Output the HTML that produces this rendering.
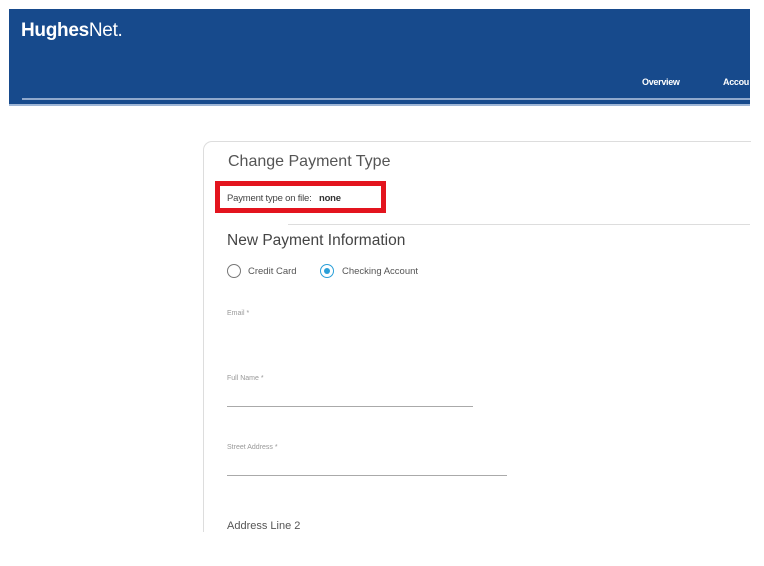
<!DOCTYPE html>
<html><head><style>
body{margin:0;width:764px;height:566px;background:#fff;position:relative;overflow:hidden;font-family:"Liberation Sans",sans-serif;}
.a{position:absolute;}
.hdr{left:9px;top:9px;width:741px;height:97px;background:#174a8c;}
.lbl{color:#999;font-size:7px;}
</style></head><body>
<div class="a hdr"></div>
<div class="a" style="left:9px;top:104px;width:741px;height:2px;background:#9fb6d6"></div>
<div class="a" style="left:22px;top:98px;width:728px;height:2px;background:#8fa8cc"></div>
<div class="a" style="left:21px;top:20px;color:#fff;font-size:19px;letter-spacing:-0.3px"><b>Hughes</b>Net.</div>
<div class="a" style="left:642px;top:77px;color:#fff;font-size:9px;font-weight:bold;letter-spacing:-0.3px">Overview</div>
<div class="a" style="left:723px;top:77px;color:#fff;font-size:9px;font-weight:bold;letter-spacing:-0.3px">Accou</div>
<div class="a" style="left:203px;top:141px;width:547px;height:400px;border:1px solid #ddd;border-radius:9px 0 0 0;border-right:none;border-bottom:none"></div>
<div class="a" style="left:0;top:532px;width:764px;height:34px;background:#fff"></div>
<div class="a" style="left:228px;top:153px;color:#555;font-size:16px">Change Payment Type</div>
<div class="a" style="left:215px;top:181px;width:161px;height:22px;border:5px solid #e3141e"></div>
<div class="a" style="left:227px;top:193px;color:#444;font-size:9.5px;letter-spacing:-0.2px">Payment type on file: <b style="margin-left:5px;color:#333">none</b></div>
<div class="a" style="left:288px;top:224px;width:462px;height:1px;background:#ddd"></div>
<div class="a" style="left:227px;top:232px;color:#444;font-size:15.5px">New Payment Information</div>
<div class="a" style="left:227px;top:264px;width:12px;height:12px;border:1px solid #777;border-radius:50%"></div>
<div class="a" style="left:248px;top:266px;color:#555;font-size:9.5px">Credit Card</div>
<div class="a" style="left:320px;top:264px;width:12px;height:12px;border:1px solid #2a9fd8;border-radius:50%"></div>
<div class="a" style="left:324px;top:268px;width:6px;height:6px;background:#2a9fd8;border-radius:50%"></div>
<div class="a" style="left:342px;top:266px;color:#555;font-size:9.5px">Checking Account</div>
<div class="a lbl" style="left:227px;top:310px">Email *</div>
<div class="a lbl" style="left:227px;top:375px">Full Name *</div>
<div class="a" style="left:227px;top:406px;width:246px;height:1px;background:#aaa"></div>
<div class="a lbl" style="left:227px;top:444px">Street Address *</div>
<div class="a" style="left:227px;top:475px;width:280px;height:1px;background:#aaa"></div>
<div class="a" style="left:227px;top:520px;color:#555;font-size:11px;height:12px;overflow:hidden">Address Line 2</div>
</body></html>
